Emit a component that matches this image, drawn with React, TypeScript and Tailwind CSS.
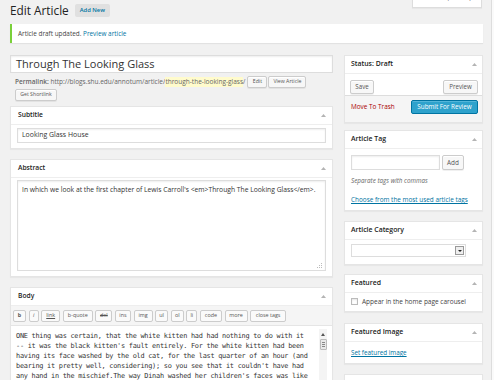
import type { ReactNode } from 'react';

const Arrow = () => (
  <svg width="5" height="3" viewBox="0 0 5 3" className="fill-[#b4b4b4]">
    <path d="M2.5 0L5 3H0z" />
  </svg>
);

function Box({ title, children, className = '', side = false }: { title: string; children?: ReactNode; className?: string; side?: boolean }) {
  return (
    <div className={`bg-white border border-[#e5e5e5] shadow-[0_1px_1px_rgba(0,0,0,0.04)] ${className}`}>
      <div className={`h-[18px] border-b border-[#eee] flex items-center justify-between ${side ? 'pl-[6px] pr-[5px]' : 'pl-[7px] pr-[6px]'}`}>
        <span className={`${side ? 'text-[6.9px]' : 'text-[6.7px]'} font-semibold text-[#222]`}>{title}</span>
        <Arrow />
      </div>
      {children}
    </div>
  );
}

const SmallBtn = ({ children, className = '' }: { children: ReactNode; className?: string }) => (
  <div className={`h-[12px] px-[3px] border border-[#ccc] bg-[#f7f7f7] rounded-[2px] text-[5.2px] text-[#555] flex items-center justify-center shadow-[0_1px_0_#fff_inset,0_1px_0_rgba(0,0,0,0.06)] ${className}`}>
    {children}
  </div>
);

const tools: [string, number, string][] = [
  ['b', 13, 'font-bold'],
  ['i', 10, 'italic'],
  ['link', 19, 'underline'],
  ['b-quote', 30, ''],
  ['del', 17, 'line-through'],
  ['ins', 16, ''],
  ['img', 19, ''],
  ['ul', 13, ''],
  ['ol', 13, ''],
  ['li', 11, ''],
  ['code', 22, ''],
  ['more', 23, ''],
  ['close tags', 36, ''],
];

const bodyLines = [
  'ONE thing was certain, that the white kitten had had nothing to do with it',
  "-- it was the black kitten's fault entirely. For the white kitten had been",
  'having its face washed by the old cat, for the last quarter of an hour (and',
  "bearing it pretty well, considering); so you see that it couldn't have had",
  "any hand in the mischief.The way Dinah washed her children's faces was like",
];

export default function App() {
  return (
    <div className="w-[494px] h-[380px] overflow-hidden bg-[#f1f1f1] flex [font-family:'Open_Sans',sans-serif] text-[#444]">
      <div className="relative w-[491px] shrink-0 pl-[10px] pr-[8px]">
        {/* screen options tab */}
        <div className="absolute right-[9px] top-[-7px] w-[70px] h-[15px] bg-white border border-[#ddd] border-t-0 flex items-end justify-center pb-[4px] text-[6px] text-[#666] shadow-[0_1px_1px_rgba(0,0,0,0.04)]">
          Screen Options <span className="ml-[3px] text-[4px]">▼</span>
        </div>

        <div className="mt-[4px] h-[13px] flex items-center">
          <h2 className="text-[11.8px] text-[#222] leading-none">Edit Article</h2>
          <div className="ml-[6px] h-[13px] px-[5px] bg-[#e0e0e0] rounded-[2px] flex items-center text-[5.8px] font-semibold text-[#0074a2]">
            Add New
          </div>
        </div>

        <div className="mt-[7px] h-[19px] bg-white border-l-[2px] border-[#7ad03a] shadow-[0_1px_1px_rgba(0,0,0,0.06)] flex items-center pl-[6px] text-[6.4px] text-[#444]">
          Article draft updated.&nbsp;<span className="text-[#0074a2]">Preview article</span>
        </div>

        <div className="mt-[12px] flex gap-[11px] items-start">
          {/* main column */}
          <div className="w-[323px] shrink-0">
            <div className="h-[18px] bg-white border border-[#ddd] shadow-[inset_0_1px_2px_rgba(0,0,0,0.07)] flex items-center px-[5px] text-[11px] text-[#333]">
              Through The Looking Glass
            </div>
            <div className="mt-[3px] h-[12px] flex items-center pl-[5px] text-[6.5px] text-[#666] whitespace-nowrap">
              <span className="font-semibold">Permalink:</span>&nbsp;http://blogs.shu.edu/annotum/article/
              <span className="bg-[#fffbcc]">through-the-looking-glass</span>/
              <div className="ml-[2px] flex gap-[1px]">
                <SmallBtn className="w-[20px]">Edit</SmallBtn>
                <SmallBtn className="w-[38px]">View Article</SmallBtn>
              </div>
            </div>
            <SmallBtn className="mt-[1px] ml-[5px] w-[42px] h-[11px]">Get Shortlink</SmallBtn>

            <Box title="Subtitle" className="mt-[5px]">
              <div className="pt-[3px] pb-[5px] px-[6px]">
                <div className="h-[15px] border border-[#ddd] shadow-[inset_0_1px_2px_rgba(0,0,0,0.07)] flex items-center px-[4px] text-[6.9px] text-[#333]">
                  Looking Glass House
                </div>
              </div>
            </Box>

            <Box title="Abstract" className="mt-[10px]">
              <div className="pt-[2px] pb-[5px] px-[6px]">
                <div className="relative h-[91px] border border-[#ddd] shadow-[inset_0_1px_2px_rgba(0,0,0,0.07)] px-[4px] pt-[4px] text-[6.75px] text-[#333] whitespace-nowrap">
                  In which we look at the first chapter of Lewis Carroll's &lt;em&gt;Through The Looking Glass&lt;/em&gt;.
                  <svg className="absolute right-[3px] bottom-[2px] fill-[#bbb]" width="5" height="5" viewBox="0 0 5 5">
                    <rect x="4" y="0" width="1" height="1" />
                    <rect x="2" y="2" width="1" height="1" />
                    <rect x="4" y="2" width="1" height="1" />
                    <rect x="0" y="4" width="1" height="1" />
                    <rect x="2" y="4" width="1" height="1" />
                    <rect x="4" y="4" width="1" height="1" />
                  </svg>
                </div>
              </div>
            </Box>

            <Box title="Body" className="mt-[10px] h-[120px]">
              <div className="h-[20px] bg-[#f5f5f5] border-b border-[#e5e5e5] flex items-center gap-[2.6px] pl-[2px]">
                {tools.map(([label, w, cls]) => (
                  <div
                    key={label}
                    style={{ width: w }}
                    className={`h-[12px] border border-[#ccc] bg-[#fafafa] rounded-[2px] flex items-center justify-center text-[5.4px] text-[#555] ${cls}`}
                  >
                    {label}
                  </div>
                ))}
              </div>
              <div className="flex">
                <div className="flex-1 pl-[5px] pt-[5px] [font-family:'DejaVu_Sans_Mono',monospace] text-[6.9px] tracking-[-0.26px] leading-[10px] text-[#333]">
                  {bodyLines.map((l) => (
                    <div key={l} className="whitespace-pre">{l}</div>
                  ))}
                </div>
                <div className="w-[8px] mr-[5px] mt-[3px] h-[80px] bg-[#f4f4f4] flex flex-col items-center">
                  <svg className="mt-[4px] fill-[#555]" width="4" height="3" viewBox="0 0 4 3">
                    <path d="M2 0L4 3H0z" />
                  </svg>
                  <div className="mt-[3px] w-[7px] h-[11px] bg-[#e8e8e8] border border-[#bbb] rounded-[1px] flex flex-col items-center justify-center gap-[1px]">
                    <div className="w-[3px] h-px bg-[#888]" />
                    <div className="w-[3px] h-px bg-[#888]" />
                    <div className="w-[3px] h-px bg-[#888]" />
                  </div>
                </div>
              </div>
            </Box>
          </div>

          {/* sidebar */}
          <div className="w-[139px] shrink-0">
            <Box title="Status: Draft" side>
              <div className="mt-[6px] px-[5px] pr-[4px] flex justify-between">
                <SmallBtn className="w-[24px] h-[14px] text-[6.2px]">Save</SmallBtn>
                <SmallBtn className="w-[35px] h-[14px] text-[6.2px]">Preview</SmallBtn>
              </div>
              <div className="mt-[1px] h-[27px] bg-[#f5f5f5] border-t border-[#ddd] pl-[6px] pr-[4px] pt-[4px]">
                <div className="h-[14px] flex items-center justify-between">
                  <span className="text-[6.4px] text-[#a00]">Move To Trash</span>
                  <div className="w-[67px] h-[14px] bg-[#2ea2cc] border border-[#0074a2] rounded-[2px] flex items-center justify-center text-[6.3px] text-white shadow-[inset_0_1px_0_rgba(120,200,230,0.5)]">
                    Submit For Review
                  </div>
                </div>
              </div>
            </Box>

            <Box title="Article Tag" side className="mt-[7px]">
              <div className="px-[6px] pb-[5px]">
                <div className="mt-[6px] flex items-center gap-[2px]">
                  <div className="w-[89px] h-[15px] border border-[#ddd] bg-white shadow-[inset_0_1px_2px_rgba(0,0,0,0.07)]" />
                  <SmallBtn className="w-[22px] h-[15px] text-[6.4px]">Add</SmallBtn>
                </div>
                <div className="mt-[6px] h-[10px] flex items-center text-[6.3px] italic text-[#666]">Separate tags with commas</div>
                <div className="mt-[9px] h-[10px] flex items-center text-[6.4px] text-[#0074a2] underline whitespace-nowrap">
                  Choose from the most used article tags
                </div>
              </div>
            </Box>

            <Box title="Article Category" side className="mt-[10px]">
              <div className="px-[6px] pt-[4px] pb-[7px]">
                <div className="w-[115px] h-[13px] border border-[#ddd] bg-white flex items-center justify-end pr-[1px]">
                  <div className="w-[9px] h-[9px] border border-[#999] bg-[#eee] flex items-center justify-center">
                    <svg width="4" height="2" viewBox="0 0 4 2" className="fill-[#222]">
                      <path d="M0 0H4L2 2z" />
                    </svg>
                  </div>
                </div>
              </div>
            </Box>

            <Box title="Featured" side className="mt-[9px]">
              <div className="px-[6px] pt-[3px] pb-[4px]">
                <div className="h-[11px] flex items-center gap-[4px]">
                  <div className="w-[7px] h-[7px] border border-[#bbb] bg-white shadow-[inset_0_1px_2px_rgba(0,0,0,0.1)]" />
                  <span className="text-[6.5px] text-[#444] whitespace-nowrap">Appear in the home page carousel</span>
                </div>
              </div>
            </Box>

            <Box title="Featured Image" side className="mt-[11px]">
              <div className="px-[6px] pt-[6px] pb-[5px]">
                <div className="h-[10px] flex items-center text-[6.3px] text-[#0074a2] underline">Set featured image</div>
              </div>
            </Box>

            <Box title="Contributors" side className="mt-[10px] h-[30px]" />
          </div>
        </div>
      </div>
      <div className="flex-1 border-l border-[#ddd] bg-[#fafafa]" />
    </div>
  );
}
